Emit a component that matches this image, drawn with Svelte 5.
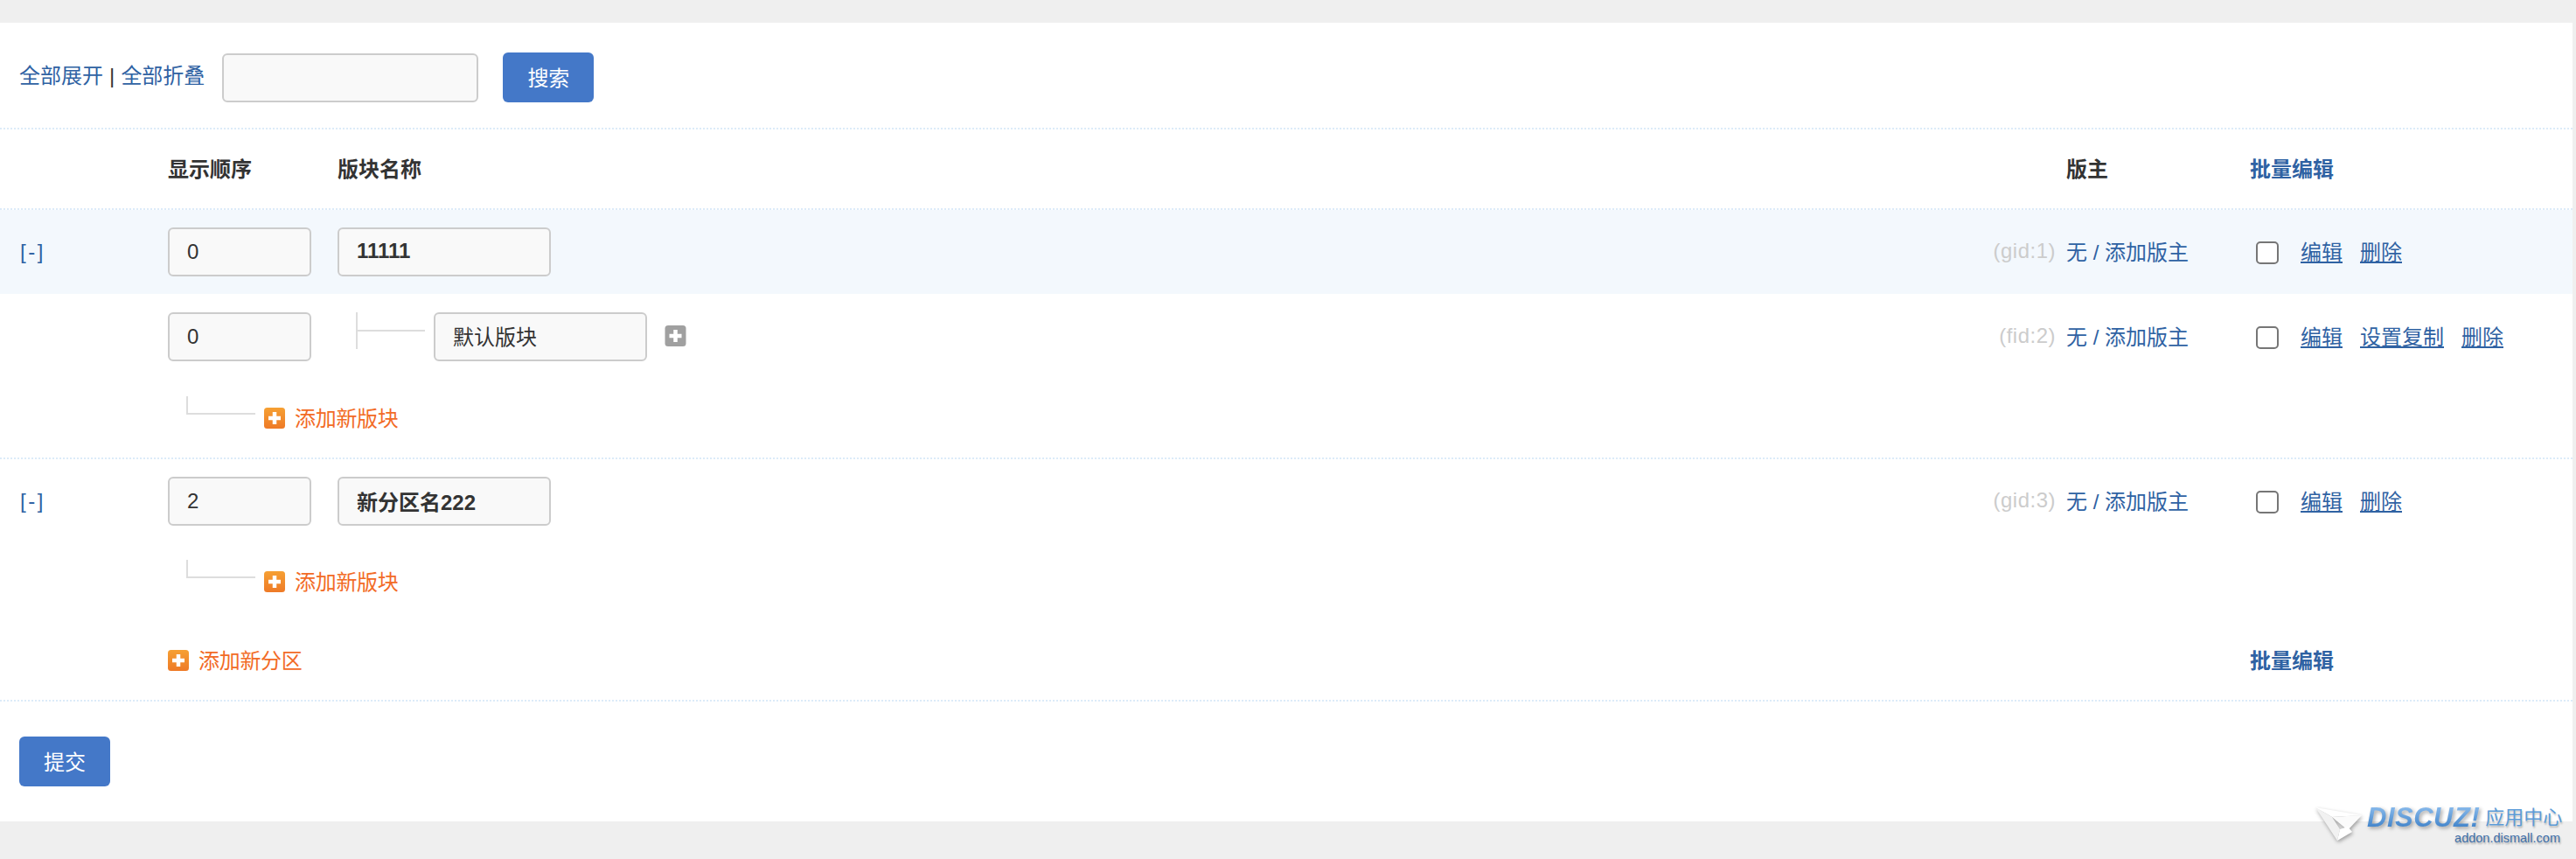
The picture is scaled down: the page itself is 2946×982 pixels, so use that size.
<script>
  const sharedLabel = '添加新版块';
</script>

{#snippet plus(kind)}
  <svg class="plus {kind}" viewBox="0 0 24 24" aria-hidden="true">
    <defs>
      <linearGradient id="org{kind}" x1="0" y1="0" x2="0" y2="1">
        <stop offset="0" stop-color="#f6a033" />
        <stop offset="1" stop-color="#ee7a27" />
      </linearGradient>
    </defs>
    <rect width="24" height="24" rx="3.5" fill={kind === 'grey' ? '#a0a0a0' : `url(#org${kind})`} />
    <path d="M9.75 5h4.5v4.75H19v4.5h-4.75V19h-4.5v-4.75H5v-4.5h4.75z" fill="#fff" />
  </svg>
{/snippet}

{#snippet addRow(label)}
  <div class="add-row">
    <span class="elbow"></span>
    <a class="add" href="#a">{@render plus('o1')}<span class="lbl">{label}</span></a>
  </div>
{/snippet}

<div class="page">
  <main class="panel">
    <div class="search">
      <span class="toggles"><a href="#a">全部展开</a> | <a href="#a">全部折叠</a></span>
      <input class="field kw" type="text" />
      <button class="btn" type="button"><span class="cap">搜索</span></button>
    </div>

    <div class="grid head sep">
      <span></span>
      <strong>显示顺序</strong>
      <strong>版块名称</strong>
      <strong>版主</strong>
      <a class="batch" href="#a">批量编辑</a>
    </div>

    <div class="grid row hl">
      <a class="fold" href="#a">[-]</a>
      <input class="field ord" type="text" value="0" />
      <div class="name">
        <input class="field title bold" type="text" value="11111" />
        <span class="id">(gid:1)</span>
      </div>
      <a class="mods" href="#a">无 / 添加版主</a>
      <div class="ops">
        <input class="check" type="checkbox" />
        <a href="#a">编辑</a><a href="#a">删除</a>
      </div>
    </div>

    <div class="grid row">
      <span></span>
      <input class="field ord" type="text" value="0" />
      <div class="name">
        <span class="tree"></span>
        <input class="field title" type="text" value="默认版块" />
        <span class="grey-wrap">{@render plus('grey')}</span>
        <span class="id">(fid:2)</span>
      </div>
      <a class="mods" href="#a">无 / 添加版主</a>
      <div class="ops">
        <input class="check" type="checkbox" />
        <a href="#a">编辑</a><a href="#a">设置复制</a><a href="#a">删除</a>
      </div>
    </div>

    <div class="sep tall">{@render addRow(sharedLabel)}</div>

    <div class="grid row">
      <a class="fold" href="#a">[-]</a>
      <input class="field ord" type="text" value="2" />
      <div class="name">
        <input class="field title bold" type="text" value="新分区名222" />
        <span class="id">(gid:3)</span>
      </div>
      <a class="mods" href="#a">无 / 添加版主</a>
      <div class="ops">
        <input class="check" type="checkbox" />
        <a href="#a">编辑</a><a href="#a">删除</a>
      </div>
    </div>

    <div class="short">{@render addRow(sharedLabel)}</div>

    <div class="grid foot sep">
      <span></span>
      <a class="add wide" href="#a">{@render plus('o2')}<span class="lbl">添加新分区</span></a>
      <a class="batch" href="#a">批量编辑</a>
    </div>

    <div class="submit"><button class="btn" type="button"><span class="cap">提交</span></button></div>
  </main>
</div>

<div class="mark">
  <svg class="plane" viewBox="0 0 54 40" aria-hidden="true">
    <polygon points="0,0 53,9 19,11" fill="#ffffff" />
    <polygon points="0,0 19,11 28,25 25,38" fill="#f1f1f1" />
    <polygon points="19,11 53,9 37,26" fill="#fbfbfb" />
    <polygon points="28,25 37,22 42,28 25,38" fill="#ffffff" />
  </svg>
  <div class="brand">
    <div class="line1"><span class="dz">DISCUZ!</span><span class="cn">应用中心</span></div>
    <div class="url">addon.dismall.com</div>
  </div>
</div>

<style>
  :global(body) {
    margin: 0;
    background: #efefef;
  }
  .page {
    padding-top: 26px;
    height: 956px;
  }
  .panel {
    width: 2942px;
    height: 913px;
    background: #fff;
    font-family: "Liberation Sans", "Noto Sans CJK SC", sans-serif;
    font-size: 24px;
    color: #333;
  }
  a {
    color: #2f62a3;
    text-decoration: none;
  }
  .sep {
    border-bottom: 2px dotted #dcebf9;
    box-sizing: border-box;
  }
  .search {
    height: 122px;
    box-sizing: border-box;
    border-bottom: 2px dotted #dcebf9;
    padding: 34px 0 0 22px;
    display: flex;
    align-items: flex-start;
  }
  .toggles {
    margin: 9px 20px 0 0;
    line-height: 36px;
    word-spacing: 0.4px;
  }
  .field {
    box-sizing: border-box;
    height: 56px;
    border: 2px solid #ccc;
    border-radius: 6px;
    background: #f9f9f9;
    padding: 0 20px;
    font: inherit;
    color: #333;
    outline: none;
  }
  .kw {
    width: 293px;
    margin: 1px 28px 0 0;
  }
  .btn {
    width: 104px;
    height: 57px;
    border: 0;
    border-radius: 6px;
    background: #4478c8;
    color: #fff;
    font: inherit;
    padding: 0 0 3px;
  }
  .grid {
    display: grid;
    grid-template-columns: 192px 194px 1fr 210px 369px;
    align-items: center;
  }
  .head {
    height: 92px;
    padding-bottom: 3px;
  }
  .head strong,
  .batch {
    font-weight: 700;
  }
  .row {
    height: 96px;
  }
  .row + .row {
    height: 97px;
  }
  .hl {
    background: #f3f8fd;
  }
  .fold {
    padding-left: 23px;
    letter-spacing: 2.5px;
  }
  .mods {
    padding-bottom: 3px;
  }
  .ord {
    width: 164px;
  }
  .title {
    width: 244px;
    padding-bottom: 2px;
  }
  .bold {
    font-weight: 700;
  }
  .name {
    display: flex;
    align-items: center;
    min-width: 0;
  }
  .id {
    margin-left: auto;
    padding: 0 12px 2px 0;
    color: #ccc;
    letter-spacing: 0.5px;
  }
  .tree {
    align-self: flex-start;
    position: relative;
    box-sizing: border-box;
    flex: none;
    width: 89px;
    height: 42px;
    margin: 0 0 0 21px;
    border-left: 2px solid #ddd;
  }
  .tree::after {
    content: "";
    position: absolute;
    left: 0;
    top: 20px;
    width: 77px;
    height: 2px;
    background: #ddd;
  }
  .grey-wrap {
    display: flex;
    margin: -1px 0 0 20px;
  }
  .plus {
    display: block;
    width: 24px;
    height: 24px;
    flex: none;
  }
  .plus.grey {
    width: 25px;
  }
  .ops {
    display: flex;
    align-items: center;
    padding-left: 7px;
  }
  .ops a {
    text-decoration: underline;
    margin: 0 20px 3px 0;
  }
  .check {
    appearance: none;
    box-sizing: border-box;
    width: 26px;
    height: 26px;
    margin: 2px 25px 0 0;
    border: 2px solid #767676;
    border-radius: 5px;
    background: #fff;
  }
  .tall {
    height: 92px;
    padding-left: 192px;
    display: flex;
    align-items: center;
  }
  .short {
    height: 88px;
    padding-left: 192px;
    display: flex;
    align-items: center;
  }
  .add-row {
    display: flex;
    align-items: center;
    margin-left: 21px;
  }
  .elbow {
    box-sizing: border-box;
    width: 79px;
    height: 21px;
    margin: 0 10px 29px 0;
    border-left: 2px solid #ddd;
    border-bottom: 2px solid #ddd;
  }
  .add {
    display: flex;
    align-items: center;
    gap: 11px;
    color: #f26b26;
  }
  .lbl {
    margin-bottom: 3px;
    letter-spacing: -0.3px;
  }
  .wide {
    grid-column: 2 / 4;
  }
  .foot {
    height: 93px;
  }
  .foot .batch {
    grid-column: 5;
    padding-bottom: 2px;
  }
  .submit {
    padding: 40px 0 0 22px;
  }
  .mark {
    position: absolute;
    left: 2648px;
    top: 923px;
    display: flex;
    font-family: "Liberation Sans", "Noto Sans CJK SC", sans-serif;
  }
  .plane {
    width: 54px;
    height: 40px;
    flex: none;
    filter: drop-shadow(1px 2px 2px rgba(0, 0, 0, 0.35));
  }
  .brand {
    margin-left: 5px;
    width: 222px;
  }
  .line1 {
    display: flex;
    align-items: center;
    height: 24px;
    line-height: 24px;
    white-space: nowrap;
  }
  .dz {
    font-size: 31px;
    font-weight: 700;
    font-style: italic;
    letter-spacing: 0.5px;
    background: linear-gradient(#86b8ea, #3f82c9);
    -webkit-background-clip: text;
    background-clip: text;
    color: transparent;
    filter: drop-shadow(2px 2px 2px rgba(0, 0, 0, 0.35));
  }
  .cn {
    margin-left: 6px;
    font-size: 22px;
    color: #5b9bd8;
    text-shadow: 1px 2px 2px rgba(0, 0, 0, 0.25);
  }
  .url {
    margin-top: 2px;
    padding-right: 1px;
    text-align: right;
    font-size: 14.5px;
    line-height: 18px;
    color: #3f6fa8;
    text-shadow: 1px 2px 2px rgba(0, 0, 0, 0.3);
  }
</style>
